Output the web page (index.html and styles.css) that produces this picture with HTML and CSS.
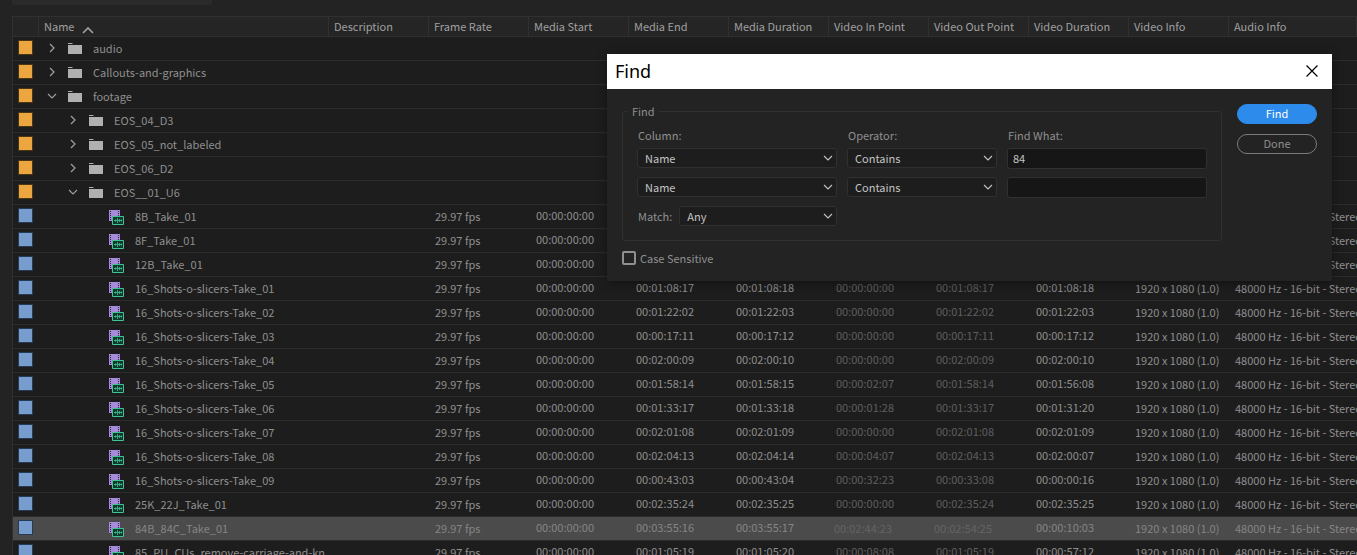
FILE: index.html
```
<!DOCTYPE html>
<html lang="en">
<head>
    <meta charset="UTF-8">
    <meta name="viewport" content="width=device-width, initial-scale=1.0">
    <title>Project</title>
    <link rel="stylesheet" href="styles.css">
</head>
<body>
    <!-- Icons -->
    <svg class="sprite" aria-hidden="true">
        <symbol id="i-right" viewBox="0 0 10 10"><path d="M3 1l4 4-4 4" fill="none" stroke="currentColor" stroke-width="1.2"/></symbol>
        <symbol id="i-down" viewBox="0 0 10 8"><path d="M1 2l4 4 4-4" fill="none" stroke="currentColor" stroke-width="1.1"/></symbol>
        <symbol id="i-folder" viewBox="0 0 14 12"><path d="M0 0h4l1 1H0zM0 2h14v9H0z" fill="currentColor"/></symbol>
        <symbol id="i-clip" viewBox="0 0 15 15">
            <path d="M0 0h11v11H0z" fill="#a78bdb"/>
            <path d="M1.5 1v10M9.5 1v5" stroke="#2a2140" stroke-width="1" stroke-dasharray="1 1"/>
            <path d="M3.5 6.5h11v8h-11z" fill="#12382b" stroke="#3fc49a"/>
            <path d="M5 10.5h8M6.5 9.5v2M8.5 8v5M10.5 9v3M12.5 9.5v2" stroke="#3fc49a" stroke-width=".8"/>
        </symbol>
    </svg>

    <div class="search"></div>

    <table class="list">
        <colgroup>
            <col class="c-label"><col class="c-name">
            <col class="c-std"><col class="c-std"><col class="c-std"><col class="c-std"><col class="c-std">
            <col class="c-std"><col class="c-std"><col class="c-std"><col class="c-std"><col>
        </colgroup>
        <thead>
            <tr>
                <th></th>
                <th>Name <svg class="sort" viewBox="0 0 12 8"><path d="M1 7l5-5 5 5" fill="none" stroke="currentColor" stroke-width="1.6"/></svg></th>
                <th>Description</th>
                <th>Frame Rate</th>
                <th>Media Start</th>
                <th>Media End</th>
                <th>Media Duration</th>
                <th>Video In Point</th>
                <th>Video Out Point</th>
                <th>Video Duration</th>
                <th>Video Info</th>
                <th>Audio Info</th>
            </tr>
        </thead>
        <tbody id="rows"></tbody>
    </table>

    <div class="dialog" role="dialog" aria-labelledby="dialogTitle">
        <div class="titlebar">
            <h1 id="dialogTitle">Find</h1>
            <button class="close" aria-label="Close"><svg viewBox="0 0 11 11"><path d="M.5 .5l10 10M10.5 .5l-10 10" stroke="#000" stroke-width="1.1"/></svg></button>
        </div>
        <form class="content" onsubmit="return false">
            <div class="options">
                <fieldset>
                    <legend>Find</legend>
                    <div class="criteria">
                        <label for="column1">Column:</label>
                        <label for="operator1">Operator:</label>
                        <label for="what1">Find What:</label>

                        <div class="select"><select id="column1"><option>Name</option></select><svg><use href="#i-down"/></svg></div>
                        <div class="select"><select id="operator1"><option>Contains</option></select><svg><use href="#i-down"/></svg></div>
                        <input type="text" id="what1" value="84">

                        <div class="select"><select aria-label="Column"><option>Name</option></select><svg><use href="#i-down"/></svg></div>
                        <div class="select"><select aria-label="Operator"><option>Contains</option></select><svg><use href="#i-down"/></svg></div>
                        <input type="text" aria-label="Find what">

                        <div class="match">
                            <label for="match">Match:</label>
                            <div class="select"><select id="match"><option>Any</option></select><svg><use href="#i-down"/></svg></div>
                        </div>
                    </div>
                </fieldset>
                <label class="check"><input type="checkbox"> Case Sensitive</label>
            </div>
            <div class="actions">
                <button class="btn primary">Find</button>
                <button class="btn">Done</button>
            </div>
        </form>
    </div>

    <script src="script.js"></script>
</body>
</html>
```
FILE: styles.css
```
* {
    margin: 0;
    padding: 0;
    box-sizing: border-box;
}

body {
    font-family: "Noto Sans CJK SC", "Noto Sans", sans-serif;
    font-size: 11px;
    line-height: 16px;
    height: 100vh;
    overflow: hidden;
    background: #232323;
    color: #8f8f8f;
    position: relative;
}

.sprite {
    display: none;
}

svg {
    display: block;
    flex: none;
}

.search {
    width: 200px;
    height: 5px;
    margin: 0 0 11px 12px;
    background: #2b2b2b;
    border-radius: 0 0 3px 3px;
}

/* Project list */
.list {
    width: calc(100% - 12px);
    margin-left: 12px;
    table-layout: fixed;
    border-collapse: separate;
    border-spacing: 0;
    border-left: 1px solid #303030;
    background: #1d1d1d;
}

.c-label {
    width: 26px;
}

.c-name {
    width: 290px;
}

.c-std {
    width: 100px;
}

th {
    height: 21px;
    padding: 0 0 2px 5px;
    background: #252525;
    border: solid #303030;
    border-width: 1px 1px 1px 0;
    color: #a0a0a0;
    font-weight: normal;
    text-align: left;
    line-height: 16px;
    white-space: nowrap;
}

.sort {
    display: inline-block;
    width: 12px;
    height: 8px;
    margin-left: 5px;
    vertical-align: -3px;
}

td {
    height: 24px;
    padding: 0 0 2px 6px;
    border-bottom: 1px solid #2c2c2c;
    overflow: hidden;
    white-space: nowrap;
}

td.name {
    padding-bottom: 0;
}

td.time {
    padding: 0 0 4px 7px;
}

td.dim {
    color: #5f5f5f;
}

.selected td {
    background: #4b4b4b;
    color: #858585;
}

.selected td.dim {
    padding: 0 0 2px 5px;
    color: #646464;
}

.swatch {
    width: 15px;
    height: 15px;
    margin-left: -1px;
    background: #eca63f;
    border: 1px solid #4a3616;
}

.swatch.blue {
    background: #769dcd;
    border-color: #263b54;
}

.item {
    display: flex;
    align-items: center;
    height: 23px;
}

.item span {
    padding-bottom: 2px;
}

.level2 {
    padding-left: 21px;
}

.level3 {
    padding-left: 64px;
}

.arrow {
    width: 10px;
    height: 10px;
    margin: 0 11px 2px 2px;
    color: #a0a0a0;
}

.folder {
    width: 14px;
    height: 12px;
    margin-right: 11px;
    color: #b0b0b0;
}

.clip {
    width: 15px;
    height: 15px;
    margin: 2px 11px 0 0;
}

/* Find dialog */
.dialog {
    position: absolute;
    top: 54px;
    right: 25px;
    width: 725px;
    background: #232323;
    box-shadow: 0 2px 10px rgba(0, 0, 0, 0.4);
}

.titlebar {
    display: flex;
    align-items: center;
    justify-content: space-between;
    height: 35px;
    padding: 0 14px 2px 8px;
    background: #fff;
    color: #000;
}

.titlebar h1 {
    font-family: "Noto Sans", sans-serif;
    font-size: 18px;
    font-weight: normal;
    line-height: 24px;
}

.close {
    width: 12px;
    height: 12px;
    border: 0;
    background: none;
}

.content {
    display: flex;
    gap: 15px;
    padding: 15px;
}

.options {
    flex: 1;
}

fieldset {
    height: 137px;
    padding: 10px 14px 0;
    border: 1px solid #303030;
    border-radius: 3px;
}

legend {
    margin-left: -9px;
    padding: 0 4px;
    line-height: 14px;
}

.criteria {
    display: grid;
    grid-template-columns: 200px 150px 200px;
    column-gap: 10px;
    row-gap: 8px;
    align-items: start;
}

.criteria label {
    padding-left: 1px;
}

.criteria > label {
    height: 12px;
    line-height: 14px;
}

.select {
    position: relative;
    flex: 1;
}

select {
    display: block;
    width: 100%;
    height: 20px;
    padding: 0 0 1px 7px;
    appearance: none;
    background: #1d1d1d;
    border: 1px solid #303030;
    border-radius: 3px;
    color: #c4c4c4;
    font: inherit;
}

.select svg {
    position: absolute;
    top: 6px;
    right: 4px;
    width: 10px;
    height: 8px;
    color: #c4c4c4;
    pointer-events: none;
}

input[type="text"] {
    width: 200px;
    height: 21px;
    padding: 0 5px 1px;
    background: #161616;
    border: 1px solid #303030;
    border-radius: 3px;
    color: #c4c4c4;
    font: inherit;
}

.match {
    display: flex;
    align-items: center;
    gap: 7px;
}

.check {
    display: flex;
    align-items: center;
    gap: 4px;
    margin-top: 9px;
}

.check input {
    width: 14px;
    height: 14px;
    appearance: none;
    border: 2px solid #8f8f8f;
    border-radius: 2px;
}

.actions {
    display: flex;
    flex-direction: column;
    gap: 10px;
}

.btn {
    width: 80px;
    height: 20px;
    padding-bottom: 2px;
    border: 1px solid #7c7c7c;
    border-radius: 10px;
    background: none;
    color: #8f8f8f;
    font: inherit;
    line-height: 16px;
}

.btn.primary {
    background: #2d8ceb;
    border-color: #2d8ceb;
    color: #fff;
}
```
FILE: script.js
```
const folders = [
    ['audio', 1, false],
    ['Callouts-and-graphics', 1, false],
    ['footage', 1, true],
    ['EOS_04_D3', 2, false],
    ['EOS_05_not_labeled', 2, false],
    ['EOS_06_D2', 2, false],
    ['EOS__01_U6', 2, true]
];

// name, media end, media duration, in point, out point, video duration
const clips = [
    ['8B_Take_01'],
    ['8F_Take_01'],
    ['12B_Take_01'],
    ['16_Shots-o-slicers-Take_01', '00:01:08:17', '00:01:08:18', '00:00:00:00', '00:01:08:17', '00:01:08:18'],
    ['16_Shots-o-slicers-Take_02', '00:01:22:02', '00:01:22:03', '00:00:00:00', '00:01:22:02', '00:01:22:03'],
    ['16_Shots-o-slicers-Take_03', '00:00:17:11', '00:00:17:12', '00:00:00:00', '00:00:17:11', '00:00:17:12'],
    ['16_Shots-o-slicers-Take_04', '00:02:00:09', '00:02:00:10', '00:00:00:00', '00:02:00:09', '00:02:00:10'],
    ['16_Shots-o-slicers-Take_05', '00:01:58:14', '00:01:58:15', '00:00:02:07', '00:01:58:14', '00:01:56:08'],
    ['16_Shots-o-slicers-Take_06', '00:01:33:17', '00:01:33:18', '00:00:01:28', '00:01:33:17', '00:01:31:20'],
    ['16_Shots-o-slicers-Take_07', '00:02:01:08', '00:02:01:09', '00:00:00:00', '00:02:01:08', '00:02:01:09'],
    ['16_Shots-o-slicers-Take_08', '00:02:04:13', '00:02:04:14', '00:00:04:07', '00:02:04:13', '00:02:00:07'],
    ['16_Shots-o-slicers-Take_09', '00:00:43:03', '00:00:43:04', '00:00:32:23', '00:00:33:08', '00:00:00:16'],
    ['25K_22J_Take_01', '00:02:35:24', '00:02:35:25', '00:00:00:00', '00:02:35:24', '00:02:35:25'],
    ['84B_84C_Take_01', '00:03:55:16', '00:03:55:17', '00:02:44:23', '00:02:54:25', '00:00:10:03'],
    ['85_PU_CUs_remove-carriage-and-kn', '00:01:05:19', '00:01:05:20', '00:00:08:08', '00:01:05:19', '00:00:57:12']
];

const rows = document.getElementById('rows');
let html = '';

folders.forEach(([name, level, open]) => {
    html += `<tr>
        <td><div class="swatch"></div></td>
        <td class="name"><div class="item level${level}">
            <svg class="arrow"><use href="#${open ? 'i-down' : 'i-right'}"/></svg>
            <svg class="folder"><use href="#i-folder"/></svg><span>${name}</span>
        </div></td>
        ${'<td></td>'.repeat(10)}
    </tr>`;
});

clips.forEach(([name, end = '', duration = '', inPoint = '', outPoint = '', videoDuration = '']) => {
    html += `<tr class="${name === '84B_84C_Take_01' ? 'selected' : ''}">
        <td><div class="swatch blue"></div></td>
        <td class="name"><div class="item level3"><svg class="clip"><use href="#i-clip"/></svg><span>${name}</span></div></td>
        <td></td>
        <td>29.97 fps</td>
        <td class="time">00:00:00:00</td>
        <td class="time">${end}</td>
        <td class="time">${duration}</td>
        <td class="time dim">${inPoint}</td>
        <td class="time dim">${outPoint}</td>
        <td class="time">${videoDuration}</td>
        <td>${end ? '1920 x 1080 (1.0)' : ''}</td>
        <td>48000 Hz - 16-bit - Stereo</td>
    </tr>`;
});

rows.innerHTML = html;
```
